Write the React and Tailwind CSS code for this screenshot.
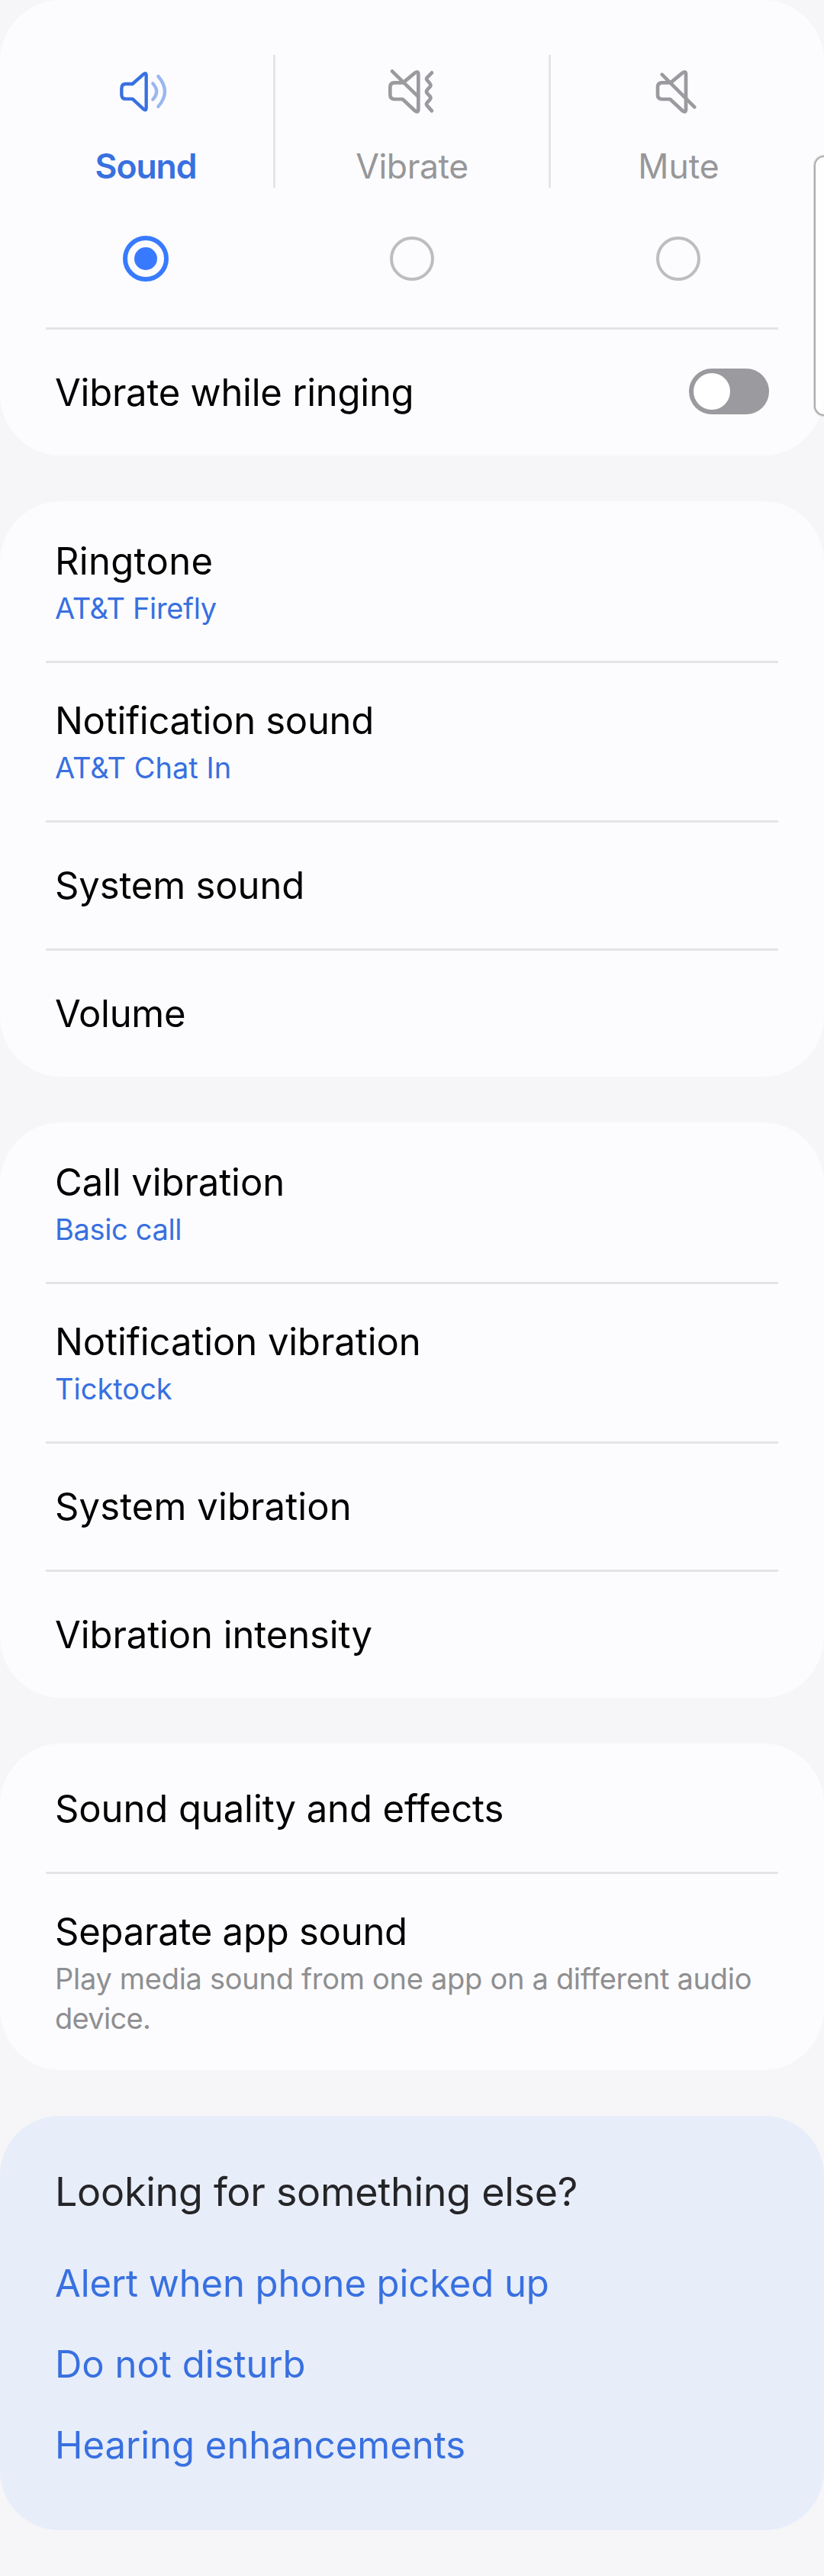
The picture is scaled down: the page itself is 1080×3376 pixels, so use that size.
import React from "react";

const speaker =
  "M85 73 L131 35 Q145 25 145 40 V178 Q145 193 131 183 L83 138 H52 Q34 138 34 120 V91 Q34 73 52 73 Z";

function SoundIcon() {
  return (
    <svg width="80" height="72" viewBox="3 0 240 216" fill="none" strokeWidth="13" strokeLinecap="round" strokeLinejoin="round">
      <path
        stroke="#3870e0"
        d="M71 78 L113 41 Q125 31 125 45 V171 Q125 186 113 176 L71 137 H45 Q28 137 28 119 V96 Q28 78 45 78 Z"
      />
      <path stroke="#9bb7ef" d="M151 76 Q180 108 151 139" />
      <path stroke="#9bb7ef" d="M172 48 Q224 108 172 167" />
    </svg>
  );
}

function VibrateIcon() {
  return (
    <svg width="80" height="72" viewBox="0 0 240 216" fill="none" stroke="#9b9a9f" strokeWidth="14" strokeLinecap="round" strokeLinejoin="round">
      <path d={speaker} />
      <path d="M42 28 L144 128" />
      <path d="M198 34 L180 52 Q174 58 180 64 L190 76 Q197 83 190 90 L180 101 Q174 108 180 115 L190 126 Q197 133 190 140 L180 151 Q174 158 180 164 L198 184" />
    </svg>
  );
}

function MuteIcon() {
  return (
    <svg width="80" height="72" viewBox="-3 0 240 216" fill="none" stroke="#9b9a9f" strokeWidth="14" strokeLinecap="round" strokeLinejoin="round">
      <g transform="translate(2 0)">
        <path d={speaker} />
      </g>
      <path d="M53 41 L181 169" />
    </svg>
  );
}

function Mode({ icon, label, width, labelClass, selected }) {
  return (
    <div className={"flex flex-col items-center pt-[84px] " + width}>
      {icon}
      <div className={"mt-8 h-[60px] text-[44.5px] leading-[60px] whitespace-nowrap " + labelClass}>{label}</div>
      <div className="mt-[61px] flex h-[60px] w-[60px] items-center justify-center">
        {selected ? (
          <div className="flex h-[60px] w-[60px] items-center justify-center rounded-full border-[6px] border-[#387aff]">
            <div className="h-[30px] w-[30px] rounded-full bg-[#387aff]" />
          </div>
        ) : (
          <div className="h-[58px] w-[58px] rounded-full border-4 border-[#bdbdc1]" />
        )}
      </div>
    </div>
  );
}

function Card({ children }) {
  return <section className="overflow-hidden rounded-[80px] bg-[#fcfcfe]">{children}</section>;
}

function Row({ title, spacing = "", sub, subSpacing = "", subColor = "text-[#3870e0]", height, first, children }) {
  return (
    <div>
      <div className={"mx-[60px] h-[3px] " + (first ? "bg-transparent" : "bg-[#e4e4e6]")} />
      <div className={"flex items-center justify-between px-[72px] " + (height || (sub ? "h-[206px]" : "h-[165px]"))}>
        <div className={sub ? "self-start pt-[46px]" : ""}>
          <div className={"text-[49px] leading-[60px] whitespace-nowrap text-black " + spacing}>{title}</div>
          {sub && <div className={"mt-[5px] text-[38px] leading-[52px] " + subColor + " " + subSpacing}>{sub}</div>}
        </div>
        {children}
      </div>
    </div>
  );
}

export default function App() {
  return (
    <main className="relative flex h-[3376px] w-[1080px] flex-col gap-[60px] overflow-hidden bg-[#f6f6f8] font-['Inter',sans-serif]">
      <Card>
        <div className="flex h-[429px] px-6">
          <Mode icon={<SoundIcon />} label="Sound" width="w-[334px]" labelClass="font-semibold tracking-[-1.1px] text-[#3870e0]" selected />
          <div className="mt-[72px] h-[174px] w-[3px] bg-[#e4e4e6]" />
          <Mode icon={<VibrateIcon />} label="Vibrate" width="w-[358px]" labelClass="tracking-[-0.4px] text-[#979799]" />
          <div className="mt-[72px] h-[174px] w-[3px] bg-[#e4e4e6]" />
          <Mode icon={<MuteIcon />} label="Mute" width="w-[334px]" labelClass="pl-px text-[#979799]" />
        </div>
        <Row title="Vibrate while ringing" spacing="tracking-[-0.25px]">
          <div className="mb-[3px] h-[60px] w-[105px] rounded-full bg-[#9b9a9f] p-1.5">
            <div className="h-12 w-12 rounded-full bg-white" />
          </div>
        </Row>
      </Card>

      <Card>
        <Row first title="Ringtone" spacing="tracking-[0.3px]" sub="AT&T Firefly" subSpacing="tracking-[-0.35px]" />
        <Row title="Notification sound" spacing="tracking-[-0.3px]" sub="AT&T Chat In" />
        <Row title="System sound" spacing="tracking-[-0.15px]" />
        <Row title="Volume" spacing="tracking-[-0.3px]" />
      </Card>

      <Card>
        <Row first title="Call vibration" spacing="tracking-[-0.1px]" sub="Basic call" subSpacing="tracking-[-0.35px]" />
        <Row title="Notification vibration" spacing="tracking-[-0.1px]" sub="Ticktock" />
        <Row title="System vibration" spacing="tracking-[0.1px]" />
        <Row title="Vibration intensity" spacing="tracking-[-0.1px]" />
      </Card>

      <Card>
        <Row first title="Sound quality and effects" spacing="tracking-[-0.1px]" />
        <Row
          title="Separate app sound"
          spacing="tracking-[-0.25px]"
          height="h-[257px]"
          sub={
            <>
              Play media sound from one app on a different audio
              <br />
              <span className="tracking-[-0.7px]">device.</span>
            </>
          }
          subSpacing="tracking-[-0.29px] whitespace-nowrap"
          subColor="text-[#8f8f91]"
        />
      </Card>

      <section className="h-[543px] rounded-[78px] bg-[#e7edf9] pt-[70px] pl-[72px]">
        <h2 className="text-[52px] leading-[60px] tracking-[-0.28px] text-[#252528]">Looking for something else?</h2>
        <div className="mt-[37px] text-[49px] leading-[106px] text-[#3870e0]">
          <div className="tracking-[-0.1px]">Alert when phone picked up</div>
          <div>Do not disturb</div>
          <div>Hearing enhancements</div>
        </div>
      </section>

      {/* Edge panel handle overlapping the right side of the screen */}
      <div className="absolute top-[204px] right-0 h-[341px] w-[13px] rounded-l-[13px] border-2 border-r-0 border-[#acacac] bg-white/60 shadow-[0_0_1px_1px_rgba(0,0,0,0.15)]" />
    </main>
  );
}
